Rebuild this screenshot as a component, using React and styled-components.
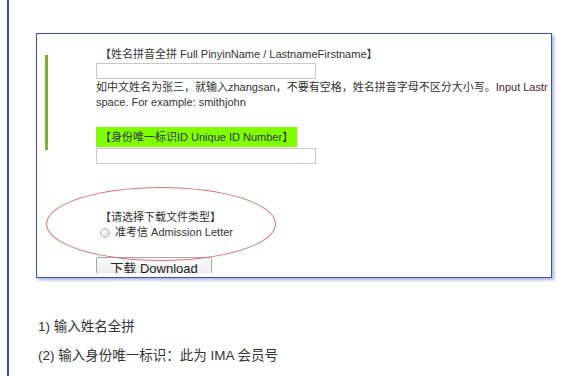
import React from "react";
import styled, { createGlobalStyle } from "styled-components";

const Global = createGlobalStyle`
  html, body { margin: 0; padding: 0; background: #fff; }
  body { font-family: "Liberation Sans", "Noto Sans CJK SC", Arial, sans-serif; color: #333; }
`;

const Page = styled.div`
  width: 578px;
  height: 376px;
  overflow: hidden;
  padding-left: 7px;
  box-sizing: border-box;
`;

const Article = styled.div`
  border-left: 2px solid #3d4fbf;
  height: 100%;
  padding: 33px 0 0 27px;
  box-sizing: border-box;
`;

const Shot = styled.div`
  width: 516px;
  height: 245px;
  box-sizing: border-box;
  border: 1.5px solid #3d4fbf;
  box-shadow: 2px 2px 3px rgba(61, 79, 191, 0.45);
  background: #fff;
  padding-bottom: 4px;
`;

const Inner = styled.div`
  position: relative;
  height: 100%;
  overflow: hidden;
  display: flex;
  font-size: 11px;
  color: #333;
`;

const SideBar = styled.div`
  width: 3px;
  height: 95px;
  margin: 21px 0 0 8px;
  background: #7cb032;
  flex: none;
`;

const Form = styled.div`
  flex: 1;
  min-width: 0;
  margin: 0 0 0 48px;
  padding-top: 13px;
  display: flex;
  flex-direction: column;
  align-items: flex-start;
  & > * { flex-shrink: 0; }
`;

const Label = styled.div`
  line-height: 14px;
  padding-left: 4px;
  white-space: nowrap;
`;

const TextInput = styled.div`
  width: 220px;
  height: 16px;
  box-sizing: border-box;
  border: 1px solid #c8c8c8;
  background: #fff;
  margin-top: ${(p) => p.$top || 0}px;
`;

const Para = styled.div`
  margin-top: 1px;
  line-height: 15px;
  white-space: nowrap;
`;

const Red = styled.span`
  color: #5a2030;
`;

const GreenLabel = styled.div`
  margin-top: 17px;
  background: #7fff00;
  width: 201px;
  height: 20px;
  line-height: 20px;
  padding-left: 4px;
  box-sizing: border-box;
  white-space: nowrap;
`;

const Spacer = styled.div`
  height: 46px;
`;

const RadioRow = styled.div`
  display: flex;
  align-items: center;
  gap: 5px;
  padding-left: 4px;
  line-height: 15px;
  margin-top: 1px;
`;

const Radio = styled.span`
  width: 10px;
  height: 10px;
  border-radius: 50%;
  box-sizing: border-box;
  border: 1px solid #b8b8b8;
  background: radial-gradient(circle at 40% 35%, #fff, #d4d4d4);
`;

const Button = styled.div`
  margin-top: 17px;
  width: 116px;
  height: 24px;
  box-sizing: border-box;
  border: 1px solid #a9a9a9;
  border-radius: 2px;
  background: linear-gradient(#fdfdfd, #e6e6e6);
  text-align: center;
  font-size: 13px;
  padding-top: 1px;
  line-height: 20px;
  color: #222;
`;

const Ellipse = styled.div`
  position: absolute;
  left: 9px;
  top: 153px;
  width: 230px;
  height: 74px;
  border: 1px solid #e07070;
  border-radius: 50%;
  box-sizing: border-box;
  pointer-events: none;
`;

const Notes = styled.div`
  margin-top: 40px;
  margin-left: 2px;
  font-size: 13.5px;
  color: #333;
  display: flex;
  flex-direction: column;
  gap: 12px;
  line-height: 17px;
`;

export default function App() {
  return (
    <>
      <Global />
      <Page>
        <Article>
          <Shot>
            <Inner>
              <SideBar />
              <Form>
                <Label>【姓名拼音全拼 Full PinyinName / LastnameFirstname】</Label>
                <TextInput $top={2} />
                <Para>
                  如中文姓名为张三，就输入zhangsan，不要有空格，姓名拼音字母不区分大小写。<Red>Input Lastr</Red>
                  <br />
                  space. For example: smithjohn
                </Para>
                <GreenLabel>【身份唯一标识ID Unique ID Number】</GreenLabel>
                <TextInput $top={1} />
                <Spacer />
                <Label>【请选择下载文件类型】</Label>
                <RadioRow>
                  <Radio />
                  准考信 Admission Letter
                </RadioRow>
                <Button>下载 Download</Button>
              </Form>
              <Ellipse />
            </Inner>
          </Shot>
          <Notes>
            <div>1) 输入姓名全拼</div>
            <div>(2) 输入身份唯一标识：此为 IMA 会员号</div>
          </Notes>
        </Article>
      </Page>
    </>
  );
}
